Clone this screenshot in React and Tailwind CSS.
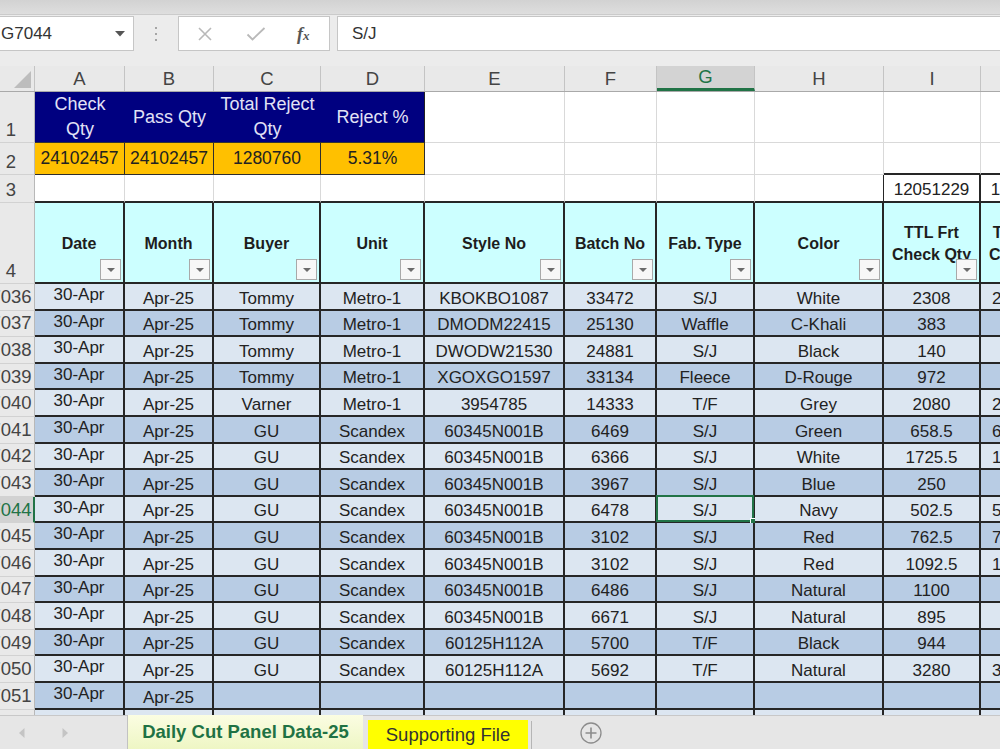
import React from 'react'

// Spreadsheet screenshot: formula bar, column letters, a small summary block,
// a filtered header row and the data rows, with the sheet tabs at the bottom.

const COL_W = [
  'w-[90px]', 'w-[89px]', 'w-[107px]', 'w-[104px]', 'w-[140px]',
  'w-[92px]', 'w-[98px]', 'w-[129px]', 'w-[97px]', 'w-[97px]',
]
const LETTERS = ['A', 'B', 'C', 'D', 'E', 'F', 'G', 'H', 'I', 'J']

const HEADERS = [
  'Date', 'Month', 'Buyer', 'Unit', 'Style No', 'Batch No',
  'Fab. Type', 'Color', 'TTL Frt Check Qty', 'TTL Back Check Qty',
]

// row no, buyer, unit, style, batch, fabric, color, frt qty, back qty
const ROWS = [
  [7036, 'Tommy', 'Metro-1', 'KBOKBO1087', '33472', 'S/J', 'White', '2308', '2296'],
  [7037, 'Tommy', 'Metro-1', 'DMODM22415', '25130', 'Waffle', 'C-Khali', '383', ''],
  [7038, 'Tommy', 'Metro-1', 'DWODW21530', '24881', 'S/J', 'Black', '140', ''],
  [7039, 'Tommy', 'Metro-1', 'XGOXGO1597', '33134', 'Fleece', 'D-Rouge', '972', ''],
  [7040, 'Varner', 'Metro-1', '3954785', '14333', 'T/F', 'Grey', '2080', '2068'],
  [7041, 'GU', 'Scandex', '60345N001B', '6469', 'S/J', 'Green', '658.5', '650.5'],
  [7042, 'GU', 'Scandex', '60345N001B', '6366', 'S/J', 'White', '1725.5', '1718'],
  [7043, 'GU', 'Scandex', '60345N001B', '3967', 'S/J', 'Blue', '250', ''],
  [7044, 'GU', 'Scandex', '60345N001B', '6478', 'S/J', 'Navy', '502.5', '500'],
  [7045, 'GU', 'Scandex', '60345N001B', '3102', 'S/J', 'Red', '762.5', '758'],
  [7046, 'GU', 'Scandex', '60345N001B', '3102', 'S/J', 'Red', '1092.5', '1088.5'],
  [7047, 'GU', 'Scandex', '60345N001B', '6486', 'S/J', 'Natural', '1100', ''],
  [7048, 'GU', 'Scandex', '60345N001B', '6671', 'S/J', 'Natural', '895', ''],
  [7049, 'GU', 'Scandex', '60125H112A', '5700', 'T/F', 'Black', '944', ''],
  [7050, 'GU', 'Scandex', '60125H112A', '5692', 'T/F', 'Natural', '3280', '3265'],
  [7051, '', '', '', '', '', '', '', ''],
]

const GRID = 'border-r border-b border-[#d9d9d9] bg-white'
const BLACK = 'border-r-2 border-b-2 border-[#262626]'

function RowHead({ label, h, selected, align = 'items-end' }) {
  return (
    <div
      className={`w-[35px] shrink-0 overflow-hidden flex ${align} ${h} border-b border-[#d2d2d2] ${
        selected ? 'bg-[#d2d2d2] border-r-2 border-r-[#217346] text-[#217346]' : 'bg-[#e9e9e9] border-r border-r-[#b8b8b8] text-[#444]'
      }`}
    >
      <div className="w-[48px] -ml-[13px] shrink-0 text-center text-[18.5px] leading-[24px]">{label}</div>
    </div>
  )
}

function FilterBtn() {
  return (
    <div className="absolute right-[2px] bottom-[2px] w-[21px] h-[21px] bg-[#f7f7f7] border border-[#a9a9a9] flex items-center justify-center">
      <svg width="10" height="6" viewBox="0 0 10 6">
        <path d="M1 1h8L5 5z" fill="#6b6b6b" />
      </svg>
    </div>
  )
}

function TopBar() {
  return (
    <>
      <div className="h-[15px] bg-gradient-to-b from-[#d2d2d2] to-[#dedede] border-b border-[#cbcbcb]" />
      <div className="h-[36px] pt-[1px] flex bg-[#ececec]">
        <div className="w-[134px] h-[35px] bg-white border border-l-0 border-[#c6c6c6] flex items-center justify-between pl-[1px] pr-[8px]">
          <span className="text-[17px] text-[#333]">G7044</span>
          <svg width="10" height="6" viewBox="0 0 10 6">
            <path d="M0 0h10L5 5.5z" fill="#555" />
          </svg>
        </div>
        <div className="w-[44px] flex flex-col items-center justify-center gap-[4px]">
          <span className="w-[2px] h-[2px] bg-[#a5a5a5]" />
          <span className="w-[2px] h-[2px] bg-[#a5a5a5]" />
          <span className="w-[2px] h-[2px] bg-[#a5a5a5]" />
        </div>
        <div className="w-[152px] h-[35px] bg-white border border-[#c6c6c6] flex items-center">
          <svg className="ml-[18px]" width="16" height="16" viewBox="0 0 16 16">
            <path d="M2 2l12 12M14 2L2 14" stroke="#b9b9b9" strokeWidth="1.6" />
          </svg>
          <svg className="ml-[33px]" width="20" height="16" viewBox="0 0 20 16">
            <path d="M1.5 8.5l5 5L18.5 2" stroke="#b9b9b9" strokeWidth="1.8" fill="none" />
          </svg>
          <span className="ml-[31px] font-['Liberation_Serif',serif] italic font-bold text-[#555] text-[18px] leading-none">
            f<span className="text-[13px]">x</span>
          </span>
        </div>
        <div className="ml-[7px] flex-1 h-[35px] bg-white border border-r-0 border-[#c6c6c6] flex items-center pl-[14px] text-[17px] text-[#333]">
          S/J
        </div>
      </div>
      <div className="h-[15px] bg-[#ececec]" />
      <div className="h-[26px] flex bg-[#e9e9e9] border-b border-[#a9a9a9]">
        <div className="w-[35px] shrink-0 border-r border-[#c4c4c4] flex items-end justify-end pr-[3px] pb-[3px]">
          <svg width="17" height="17" viewBox="0 0 17 17">
            <path d="M17 0V17H0z" fill="#bdbdbd" />
          </svg>
        </div>
        {LETTERS.map((l, i) => (
          <div
            key={l}
            className={`${COL_W[i]} shrink-0 flex items-center justify-center text-[18.5px] ${
              l === 'G'
                ? 'bg-[#d3d3d3] text-[#217346] border-b-[3px] border-[#217346] border-r border-r-[#c4c4c4]'
                : 'text-[#444] border-r border-[#c4c4c4]'
            }`}
          >
            {l}
          </div>
        ))}
      </div>
    </>
  )
}

function SummaryRows() {
  const heads = [['Check', 'Qty'], ['Pass Qty'], ['Total Reject', 'Qty'], ['Reject %']]
  const vals = ['24102457', '24102457', '1280760', '5.31%']
  return (
    <>
      <div className="flex h-[51px]">
        <RowHead label="1" h="h-[51px]" />
        {heads.map((lines, i) => (
          <div
            key={i}
            className={`${COL_W[i]} shrink-0 bg-[#000080] border-b border-[#333] ${i === 3 ? 'border-r border-r-[#222]' : ''} flex flex-col items-center justify-center text-[18px] leading-[25px] text-[#e2e2f6]`}
          >
            {lines.map((t) => (
              <span key={t}>{t}</span>
            ))}
          </div>
        ))}
        {[4, 5, 6, 7, 8, 9].map((i) => (
          <div key={i} className={`${COL_W[i]} shrink-0 ${GRID}`} />
        ))}
      </div>
      <div className="flex h-[32px]">
        <RowHead label="2" h="h-[32px]" />
        {vals.map((v, i) => (
          <div
            key={i}
            className={`${COL_W[i]} shrink-0 bg-[#ffc000] border-r border-b border-[#2e2e2e] flex items-center justify-center text-[17.5px] text-[#222]`}
          >
            {v}
          </div>
        ))}
        {[4, 5, 6, 7].map((i) => (
          <div key={i} className={`${COL_W[i]} shrink-0 ${GRID}`} />
        ))}
        {[8, 9].map((i) => (
          <div key={i} className={`${COL_W[i]} shrink-0 bg-white border-r border-r-[#d9d9d9] border-b-2 border-b-[#262626]`} />
        ))}
      </div>
      <div className="flex h-[28px]">
        <RowHead label="3" h="h-[28px]" />
        {[0, 1, 2, 3, 4, 5, 6, 7].map((i) => (
          <div
            key={i}
            className={`${COL_W[i]} shrink-0 bg-white border-b-2 border-b-[#262626] border-r ${i === 7 ? 'border-r-[#262626]' : 'border-r-[#d9d9d9]'}`}
          />
        ))}
        <div className={`${COL_W[8]} shrink-0 bg-white ${BLACK} flex items-end justify-center text-[17px] leading-[22px] text-[#222]`}>
          12051229
        </div>
        <div className={`${COL_W[9]} shrink-0 bg-white ${BLACK} flex items-end justify-center text-[17px] leading-[22px] text-[#222]`}>
          12051228
        </div>
      </div>
    </>
  )
}

function HeaderRow() {
  return (
    <div className="flex h-[81px]">
      <RowHead label="4" h="h-[81px]" />
      {HEADERS.map((t, i) => (
        <div
          key={t}
          className={`${COL_W[i]} shrink-0 relative bg-[#ccffff] ${BLACK} flex items-center justify-center text-center px-[6px] pt-[2px] text-[16px] leading-[22px] font-bold text-[#1d1d1d]`}
        >
          <span>{t}</span>
          <FilterBtn />
        </div>
      ))}
    </div>
  )
}

function DataRow({ r, idx }) {
  const [no, buyer, unit, style, batch, fab, color, frt, back] = r
  const bg = idx % 2 === 0 ? 'bg-[#dce6f1]' : 'bg-[#b8cce4]'
  const cells = ['Apr-25', buyer, unit, style, batch, fab, color, frt]
  const selected = no === 7044
  return (
    <div className="flex h-[26.6px] shrink-0">
      <RowHead label={String(no)} h="h-[26.6px]" selected={selected} align="items-center" />
      <div className={`${COL_W[0]} shrink-0 ${bg} ${BLACK} flex items-start justify-center pt-[1px] text-[17px] leading-[20px] text-[#222]`}>
        30-Apr
      </div>
      {cells.map((c, i) => (
        <div
          key={i}
          className={`${COL_W[i + 1]} shrink-0 relative ${bg} ${BLACK} flex items-end justify-center text-[17px] leading-[20px] text-[#222]`}
        >
          {c}
          {selected && i + 1 === 6 && (
            <>
              <div className="absolute -left-[1px] -top-[2px] -right-[1px] -bottom-[1px] border-2 border-[#217346]" />
              <div className="absolute -right-[4px] -bottom-[4px] w-[7px] h-[7px] bg-[#217346] border border-white" />
            </>
          )}
        </div>
      ))}
      <div className={`${COL_W[9]} shrink-0 ${bg} ${BLACK} flex items-end pl-[11px] text-[17px] leading-[20px] text-[#222]`}>
        {back}
      </div>
    </div>
  )
}

// the next row only peeks out above the tab bar, so it carries no text
function EdgeRow() {
  return (
    <div className="flex h-[26.6px] shrink-0">
      <div className="w-[35px] shrink-0 bg-[#e9e9e9] border-r border-[#b8b8b8]" />
      {COL_W.map((w) => (
        <div key={w} className={`${w} shrink-0 bg-[#dce6f1] border-r-2 border-[#262626]`} />
      ))}
    </div>
  )
}

function TabBar() {
  return (
    <div className="h-[34px] shrink-0 flex bg-[#e6e6e6] border-t border-[#c8c8c8]">
      <div className="w-[127px] flex items-center">
        <svg className="ml-[19px]" width="6" height="10" viewBox="0 0 6 10">
          <path d="M5.5 0v10L0 5z" fill="#c4c4c4" />
        </svg>
        <svg className="ml-[37px]" width="6" height="10" viewBox="0 0 6 10">
          <path d="M0.5 0v10L6 5z" fill="#c4c4c4" />
        </svg>
      </div>
      <div className="w-[236px] -mt-[1px] bg-gradient-to-b from-[#fbfde2] to-[#eef6c4] border-l border-[#c2c2c2] flex items-center justify-center font-bold text-[18.5px] text-[#1f7244]">
        Daily Cut Panel Data-25
      </div>
      <div className="w-[5px]" />
      <div className="w-[160px] mt-[4px] bg-[#ffff00] flex items-center justify-center text-[18.5px] text-[#333]">
        Supporting File
      </div>
      <div className="ml-[3px] mt-[5px] w-px bg-[#b5b5b5]" />
      <div className="ml-[48px] flex items-center">
        <svg width="22" height="22" viewBox="0 0 22 22">
          <circle cx="11" cy="11" r="10" fill="none" stroke="#8c8c8c" strokeWidth="1.3" />
          <path d="M11 5.5v11M5.5 11h11" stroke="#8c8c8c" strokeWidth="1.6" />
        </svg>
      </div>
    </div>
  )
}

export default function App() {
  return (
    <div className="w-[1000px] h-[749px] overflow-hidden flex flex-col bg-[#ececec] font-['Liberation_Sans',Arial,sans-serif]">
      <TopBar />
      <div className="flex-1 overflow-hidden bg-white flex flex-col">
        <div className="flex flex-col w-[1080px]">
          <SummaryRows />
          <HeaderRow />
          {ROWS.map((r, i) => (
            <DataRow key={r[0]} r={r} idx={i} />
          ))}
          <EdgeRow />
        </div>
      </div>
      <TabBar />
    </div>
  )
}
